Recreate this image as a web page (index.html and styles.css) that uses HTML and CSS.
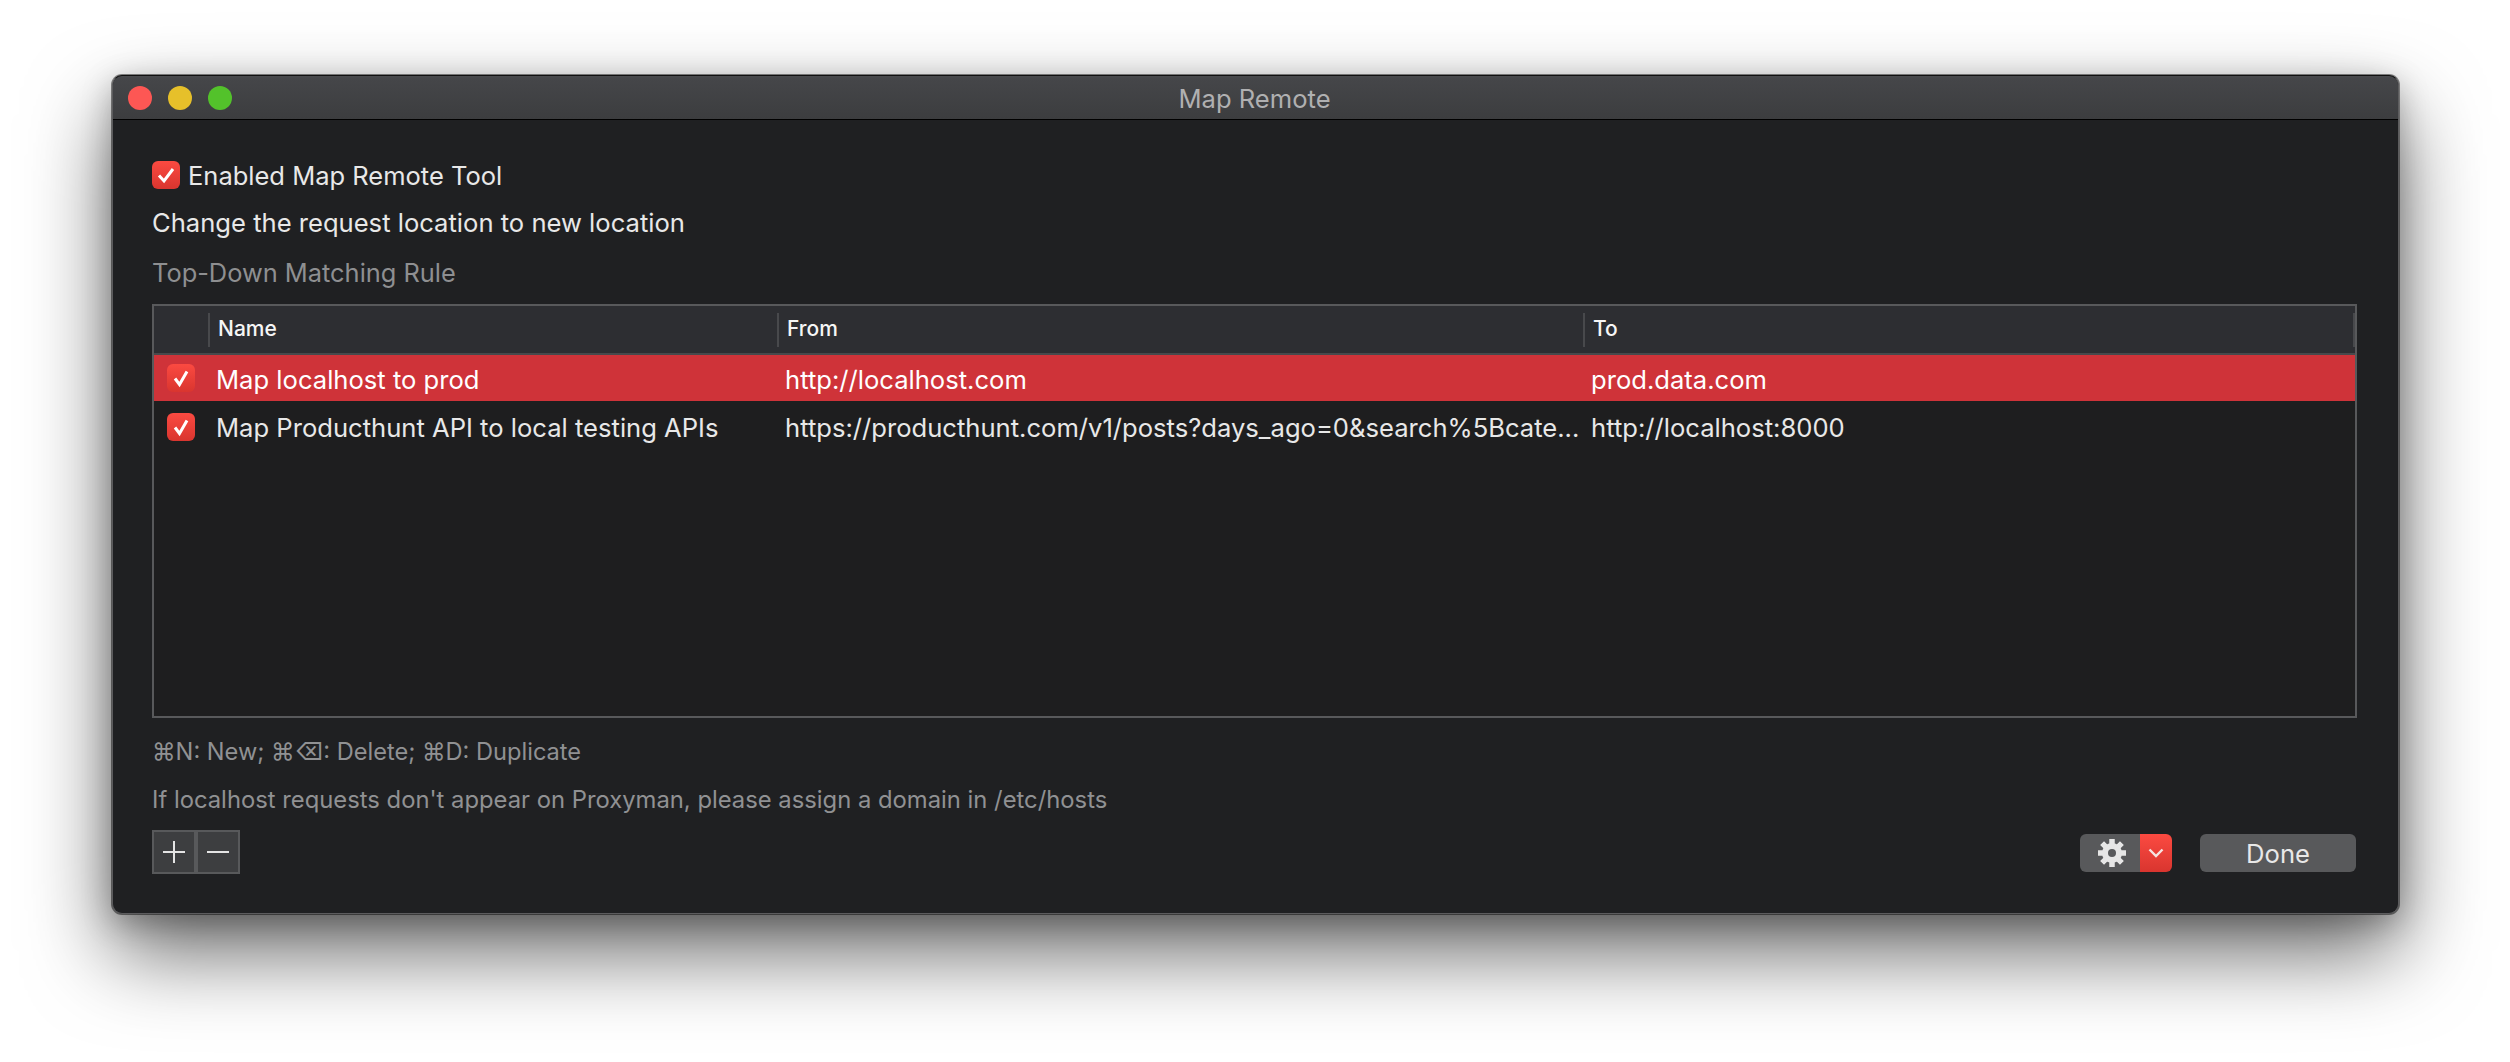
FILE: index.html
```html
<!DOCTYPE html>
<html lang="en">
<head>
    <meta charset="UTF-8">
    <title>Map Remote</title>
    <link rel="stylesheet" href="styles.css">
</head>
<body>
    <div class="window">
        <div class="titlebar">
            <div class="lights">
                <span class="light red"></span>
                <span class="light yellow"></span>
                <span class="light green"></span>
            </div>
            <div class="title">Map Remote</div>
        </div>
        <div class="content">
            <label class="enable-row">
                <span class="check">
                    <svg viewBox="0 0 28 28"><path d="M7 14.5l5 5.5 9-12"/></svg>
                </span>
                Enabled Map Remote Tool
            </label>
            <p class="desc">Change the request location to new location</p>
            <p class="section">Top-Down Matching Rule</p>

            <div class="table">
                <div class="thead">
                    <div class="th-check"></div>
                    <div class="th">Name</div>
                    <div class="th">From</div>
                    <div class="th th-last">To</div>
                </div>
                <div class="row selected">
                    <div class="td-check">
                        <span class="check">
                            <svg viewBox="0 0 28 28"><path d="M8 14.5l4.5 6 7.5-13"/></svg>
                        </span>
                    </div>
                    <div class="td">Map localhost to prod</div>
                    <div class="td">http://localhost.com</div>
                    <div class="td">prod.data.com</div>
                </div>
                <div class="row">
                    <div class="td-check">
                        <span class="check">
                            <svg viewBox="0 0 28 28"><path d="M8 14.5l4.5 6 7.5-13"/></svg>
                        </span>
                    </div>
                    <div class="td">Map Producthunt API to local testing APIs</div>
                    <div class="td">https://producthunt.com/v1/posts?days_ago=0&amp;search%5Bcate...</div>
                    <div class="td">http://localhost:8000</div>
                </div>
            </div>

            <p class="hint hint-keys">⌘N: New; ⌘⌫: Delete; ⌘D: Duplicate</p>
            <p class="hint hint-hosts">If localhost requests don't appear on Proxyman, please assign a domain in /etc/hosts</p>

            <div class="footer">
                <div class="add-remove">
                    <button class="square-btn">
                        <svg viewBox="0 0 40 40"><path d="M9 20h22M20 9v22"/></svg>
                    </button>
                    <button class="square-btn">
                        <svg viewBox="0 0 40 40"><path d="M9 20h22"/></svg>
                    </button>
                </div>
                <div class="actions">
                    <div class="gear-group">
                        <button class="gear-btn">
                            <svg viewBox="0 0 30 30">
                                <circle class="gear-body" cx="15" cy="15" r="10"/>
                                <path class="gear-teeth" d="M15 1v28M1 15h28M5.1 5.1l19.8 19.8M24.9 5.1L5.1 24.9"/>
                                <circle class="gear-hole" cx="15" cy="15" r="4"/>
                            </svg>
                        </button>
                        <button class="arrow-btn">
                            <svg viewBox="0 0 16 10"><path d="M1.5 1.5L8 8l6.5-6.5"/></svg>
                        </button>
                    </div>
                    <button class="done-btn">Done</button>
                </div>
            </div>
        </div>
    </div>
</body>
</html>
```

FILE: styles.css
```css
html, body {
    margin: 0;
    padding: 0;
    background-color: #fff;
}

body {
    width: 2510px;
    height: 1062px;
    overflow: hidden;
    font-family: Inter, "Noto Sans", sans-serif;
}

p {
    margin: 0;
}

button {
    font-family: inherit;
    border: none;
    padding: 0;
}

.window {
    box-sizing: border-box;
    width: 2287px;
    height: 839px;
    margin: 75px 0 0 112px;
    background-color: #1f2022;
    border: 1px solid #5c5c5e;
    border-top-color: #111;
    border-radius: 10px;
    box-shadow: 0 0 0 1px rgba(0,0,0,0.45), 0 38px 84px rgba(0,0,0,0.6), 0 8px 30px rgba(0,0,0,0.25);
    overflow: hidden;
}

.titlebar {
    position: relative;
    height: 43px;
    display: flex;
    align-items: center;
    justify-content: center;
    background: linear-gradient(#4a4b4e, #454649 6%, #3c3d3f);
    border-bottom: 1px solid #000;
}

.lights {
    position: absolute;
    left: 15px;
    top: 10px;
    display: flex;
    gap: 16px;
}

.light {
    width: 24px;
    height: 24px;
    border-radius: 50%;
}

.red { background-color: #fd5754; }
.yellow { background-color: #e6c02a; }
.green { background-color: #53c22b; }

.title {
    padding: 2px 2px 0 0;
    color: #b0b0b1;
    font-size: 25.6px;
    line-height: 30px;
}

.content {
    padding: 40px 41px 0 39px;
}

.check {
    display: block;
    flex: none;
    width: 28px;
    height: 28px;
    border-radius: 6px;
    background: linear-gradient(#fb4a41, #d9352f);
}

.check svg {
    display: block;
    width: 28px;
    height: 28px;
}

.check path {
    fill: none;
    stroke: #fff;
    stroke-width: 3;
}

.enable-row {
    display: flex;
    align-items: center;
    gap: 8px;
    height: 28px;
    padding-top: 1px;
    color: #e8e8e8;
    font-size: 25.5px;
}

.enable-row .check {
    margin-top: -1px;
}

.desc {
    margin-top: 19px;
    color: #e8e8e8;
    font-size: 25.6px;
    line-height: 30px;
}

.section {
    margin-top: 20px;
    color: #8e8f91;
    font-size: 25.4px;
    line-height: 30px;
}

.table {
    box-sizing: border-box;
    height: 414px;
    margin-top: 16px;
    background-color: #1e1e1f;
    border: 2px solid #58595b;
}

.thead,
.row {
    display: grid;
    grid-template-columns: 54px 569px 806px 1fr;
}

.thead {
    height: 47px;
    align-items: center;
    background-color: #2d2e32;
    border-bottom: 2px solid #48494c;
}

.th {
    box-sizing: border-box;
    height: 34px;
    padding-left: 8px;
    border-left: 2px solid #48494c;
    color: #f6f6f6;
    font-size: 21px;
    font-weight: 500;
    line-height: 32px;
}

.th-last {
    border-right: 2px solid #48494c;
}

.row {
    height: 48px;
    align-items: center;
    color: #e8e8e8;
    font-size: 25.6px;
}

.row.selected {
    height: 46px;
    margin-bottom: 2px;
    background-color: #cf3339;
    color: #fff;
}

.td-check {
    padding-left: 13px;
}

.td {
    padding-left: 8px;
    white-space: nowrap;
    overflow: hidden;
}

.row.selected .td {
    padding-top: 2px;
}

.hint {
    color: #909193;
    font-size: 23.6px;
    line-height: 30px;
}

.hint-keys {
    margin-top: 19px;
}

.hint-hosts {
    margin-top: 18px;
    font-size: 23.8px;
}

.footer {
    display: flex;
    justify-content: space-between;
    margin-top: 15px;
}

.add-remove {
    display: flex;
}

.square-btn {
    box-sizing: border-box;
    width: 44px;
    height: 44px;
    background-color: #3d3e40;
    border: 2px solid #58595b;
}

.square-btn svg {
    display: block;
    width: 40px;
    height: 40px;
}

.square-btn path {
    fill: none;
    stroke: #e4e4e4;
    stroke-width: 2;
}

.actions {
    display: flex;
    gap: 28px;
    padding: 4px 1px 0 0;
}

.gear-group {
    display: flex;
    height: 38px;
    border-radius: 6px;
    overflow: hidden;
}

.gear-btn {
    width: 60px;
    height: 38px;
    padding-left: 4px;
    background-color: #58595b;
    display: flex;
    align-items: center;
    justify-content: center;
}

.gear-btn svg {
    width: 30px;
    height: 30px;
}

.gear-body { fill: #e6e6e6; }
.gear-teeth { stroke: #e6e6e6; stroke-width: 5.5; }
.gear-hole { fill: #58595b; }

.arrow-btn {
    width: 32px;
    height: 38px;
    background: linear-gradient(#fb4a41, #d9352f);
    display: flex;
    align-items: center;
    justify-content: center;
}

.arrow-btn svg {
    width: 16px;
    height: 10px;
}

.arrow-btn path {
    fill: none;
    stroke: #f6e4e2;
    stroke-width: 2.4;
}

.done-btn {
    width: 156px;
    height: 38px;
    background-color: #58595b;
    border-radius: 6px;
    color: #e8e8e8;
    font-size: 25.6px;
}
```
